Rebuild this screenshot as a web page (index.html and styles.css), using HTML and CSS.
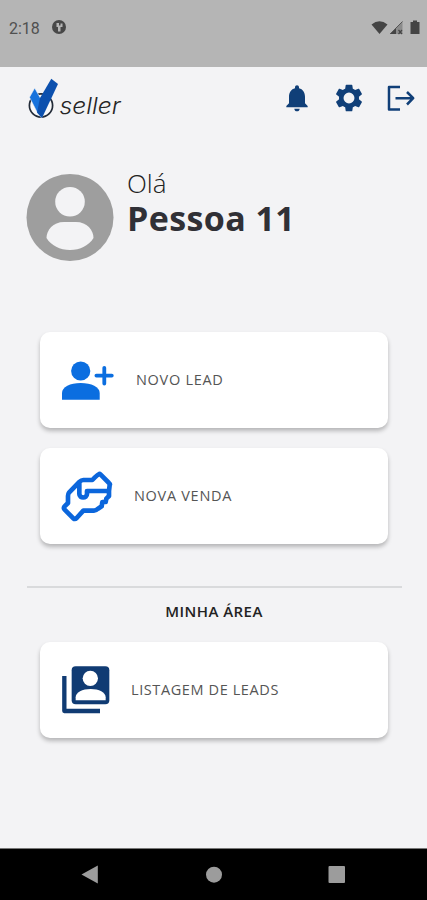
FILE: index.html
```html
<!DOCTYPE html>
<html lang="pt-BR">
<head>
<meta charset="utf-8">
<meta name="viewport" content="width=device-width, initial-scale=1">
<title>Seller</title>
<link rel="stylesheet" href="styles.css">
</head>
<body>
<div class="status">
  <span class="clock">2:18</span>
  <svg class="app-dot" width="16" height="16" viewBox="0 0 16 16"><circle cx="8" cy="8" r="7" fill="#484848"/><path d="M5.500 4H8v2.500h1.500V4.500h2V8H9.500v4.500H7V8H5.500z" fill="#b5b5b5"/></svg>
  <svg class="signals" width="50" height="16" viewBox="0 0 50 16"><path d="M0.500 4.500Q8.500-2 16.500 4.500L8.500 14z" fill="#444"/><path d="M31.500 1.500V14H19z" fill="#8b8b8b"/><path d="M25 8v6h-6z" fill="#444"/><path d="M31.500 1.500L19 14" stroke="#555" fill="none"/><path d="M27.500 10l3.500 4m0-4l-3.500 4" stroke="#444" stroke-width="1.200"/><path d="M39.500 2h2.500V.5h4V2h2.500v12h-9z" fill="#444"/></svg>
</div>
<header class="top">
  <svg class="logo" width="98" height="44" viewBox="0 0 98 44" role="img" aria-label="V seller">
    <circle cx="15" cy="29.500" r="11.600" fill="#f9f9fa" stroke="#222b38" stroke-width="1.700"/>
    <path d="M8.700 12L3.500 21.300 11.500 37 15.500 42 20 31 16 25z" fill="#1672dc" stroke="#f3f3f5" stroke-width=".6"/>
    <path d="M25.300 2.800L32 8 16 42 11 36.500 14 22z" fill="#0c50ae"/>
    <text class="logo-text" x="33.500" y="37.800" textLength="61" lengthAdjust="spacingAndGlyphs">seller</text>
  </svg>
  <nav class="actions">
    <svg width="32" height="32" viewBox="0 0 24 24"><path fill="#103f78" d="M12 22c1.100 0 2-.9 2-2h-4c0 1.100.9 2 2 2zm6-6v-5c0-3.070-1.640-5.640-4.500-6.320V4c0-.83-.67-1.500-1.500-1.500s-1.500.67-1.500 1.500v.68C7.630 5.360 6 7.920 6 11v5l-2 2v1h16v-1l-2-2z"/></svg>
    <svg width="32" height="32" viewBox="0 0 24 24"><path fill="#103f78" fill-rule="evenodd" d="M19.430 12.980c.04-.32.07-.64.07-.98s-.03-.66-.07-.98l2.110-1.650c.19-.15.24-.42.12-.64l-2-3.460c-.12-.22-.39-.3-.61-.22l-2.490 1c-.52-.4-1.080-.73-1.690-.98l-.38-2.650A.49.49 0 0 0 14 2h-4c-.25 0-.46.18-.49.42l-.38 2.650c-.61.25-1.170.59-1.690.98l-2.490-1c-.23-.09-.49 0-.61.22l-2 3.460c-.13.22-.07.49.12.64l2.110 1.650c-.04.32-.07.65-.07.98s.03.66.07.98l-2.110 1.650c-.19.15-.24.42-.12.64l2 3.460c.12.22.39.3.61.22l2.490-1c.52.4 1.080.73 1.690.98l.38 2.650c.03.24.24.42.49.42h4c.25 0 .46-.18.49-.42l.38-2.650c.61-.25 1.170-.59 1.690-.98l2.490 1c.23.09.49 0 .61-.22l2-3.460c.12-.22.07-.49-.12-.64zM12 16.100a4.100 4.100 0 1 1 0-8.200 4.100 4.100 0 0 1 0 8.200z"/></svg>
    <svg width="32" height="32" viewBox="0 0 32 32"><path fill="none" stroke="#103f78" stroke-width="2.500" stroke-linejoin="round" d="M15 5H4v22.500h11M10.500 16.200h18M22 10l6.200 6.200-6.200 6.300"/></svg>
  </nav>
</header>
<main>
  <section class="greeting">
    <svg width="88" height="88" viewBox="0 0 88 88"><circle cx="44" cy="43.500" r="43.500" fill="#9e9e9e"/><circle cx="44" cy="27.700" r="14.800" fill="#f3f3f5"/><path d="M38 48H50C61 48 67.500 56 67.500 64C63 71.500 54 76 44 76S25 71.500 20.500 64C20.500 56 27 48 38 48z" fill="#f3f3f5"/></svg>
    <div class="who"><span class="hello">Olá</span><strong class="name">Pessoa 11</strong></div>
  </section>
  <a class="card lead">
    <svg width="54" height="40" viewBox="0 0 54 40"><g fill="#0b6ee0"><circle cx="19.700" cy="11" r="9.600"/><path d="M1 39.700V33C1 27 9 23 19.700 23S38.700 27 38.700 33v6.700z"/></g><path d="M43.300 7.800v15.800M35.400 15.600h15.400" stroke="#0b6ee0" stroke-width="3.800" stroke-linecap="round"/></svg>
    <span>NOVO LEAD</span>
  </a>
  <a class="card sale">
    <svg width="54" height="52" viewBox="90 88 162 156"><path fill="none" stroke="#0b66dc" stroke-width="14" stroke-linejoin="round" stroke-linecap="round" d="M207 100Q204 100 187 118H160Q154 118 148 124L117 156Q114 160 114 166V187L103 198Q100 203 104 207L130 233Q135 237 140 232L160 210H192Q198 210 204 204L215 197 217 184H227L229 174 237 166V151L239 133Q241 130 237 127L212 102Q209 99 207 100ZM237 151H171V160C171 174 148 174 148 160V128"/></svg>
    <span>NOVA VENDA</span>
  </a>
  <hr>
  <h2>MINHA ÁREA</h2>
  <a class="card list">
    <svg width="50" height="50" viewBox="139 269 150 150"><path fill="none" stroke="#103b73" stroke-width="13" stroke-linejoin="round" d="M149 302V407H256"/><rect x="171" y="273" width="113" height="114" rx="12" fill="#103b73"/><circle cx="227" cy="309" r="23" fill="#fff"/><path d="M183 375V366C183 351 203 341 228 341S273 351 273 366V375z" fill="#fff"/></svg>
    <span>LISTAGEM DE LEADS</span>
  </a>
</main>
<footer class="navbar">
  <svg width="427" height="51" viewBox="0 0 427 51" fill="#9c9c9c"><path d="M81.500 25.500L97.800 16.500V34.500z"/><circle cx="214" cy="25.700" r="8"/><rect x="328.500" y="17" width="16.500" height="17" rx="1"/></svg>
</footer>
</body>
</html>
```

FILE: styles.css
```css
* { box-sizing: border-box; }
body {
  margin: 0;
  height: 900px;
  display: flex;
  flex-direction: column;
  overflow: hidden;
  background: #f3f3f5;
  font-family: "Open Sans", "Noto Sans", sans-serif;
}
svg { display: block; flex: none; }
.status {
  flex: none;
  height: 67px;
  padding: 19px 6px 0 9px;
  display: flex;
  align-items: flex-start;
  background: #b5b5b5;
}
.clock {
  width: 42px;
  font: 16px/20px Roboto, sans-serif;
  color: #505050;
}
.signals { margin: 1px 0 0 auto; }
.top {
  flex: none;
  height: 64px;
  padding: 9px 10px 0 26px;
  display: flex;
  justify-content: space-between;
}
.logo-text {
  font: italic 300 23px Inter, sans-serif;
  fill: #262626;
}
.actions {
  display: flex;
  gap: 20px;
  padding-top: 6px;
}
main { flex: 1; }
.greeting {
  display: flex;
  height: 88px;
  margin: 43px 26px 70px;
  gap: 13px;
}
.who { display: flex; flex-direction: column; }
.hello {
  font-size: 26px;
  font-weight: 300;
  line-height: 18px;
  color: #222;
}
.name {
  font-size: 34px;
  line-height: 52px;
  letter-spacing: .4px;
  white-space: nowrap;
  color: #303036;
}
.card {
  display: flex;
  align-items: center;
  height: 96px;
  margin: 0 39px 20px 40px;
  padding-left: 21px;
  border-radius: 10px;
  background: #fff;
  box-shadow: 0 3px 4px rgba(0, 0, 0, .25);
  font-size: 14.5px;
  letter-spacing: .7px;
  color: #555;
}
.card span { padding-bottom: 2px; }
.lead { gap: 21px; }
.sale { padding-left: 20px; gap: 20px; margin-bottom: 42px; }
.list { gap: 20px; letter-spacing: .6px; }
.list svg { margin-bottom: 1px; }
hr {
  height: 2px;
  margin: 0 25px 0 27px;
  border: 0;
  background: #d9dadc;
}
h2 {
  margin: 13px 0 20px;
  padding-left: 1px;
  text-align: center;
  font-size: 15px;
  line-height: 21px;
  font-weight: 600;
  letter-spacing: .45px;
  color: #222;
}
.navbar {
  flex: none;
  height: 52px;
  background: #000;
  border-top: 1px solid #777;
}
```
